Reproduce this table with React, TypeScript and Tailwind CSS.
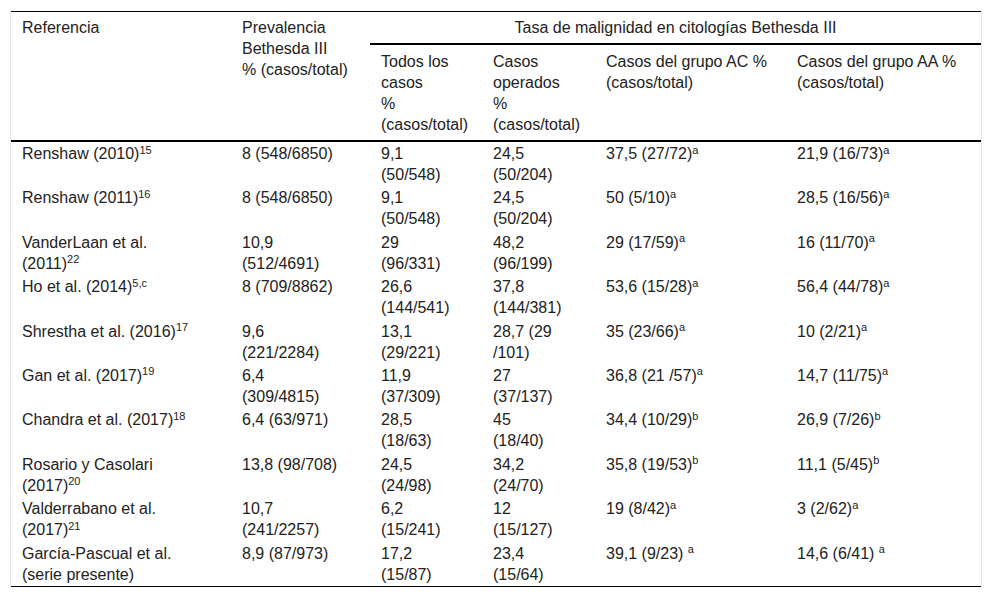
// Tabla: tasa de malignidad en citologías Bethesda III
import React from 'react';

// cada celda: líneas separadas por \n, superíndice tras ^
const rows: string[][] = [
  ['Renshaw (2010)^15', '8 (548/6850)', '9,1\n(50/548)', '24,5\n(50/204)', '37,5 (27/72)^a', '21,9 (16/73)^a'],
  ['Renshaw (2011)^16', '8 (548/6850)', '9,1\n(50/548)', '24,5\n(50/204)', '50 (5/10)^a', '28,5 (16/56)^a'],
  ['VanderLaan et al.\n(2011)^22', '10,9\n(512/4691)', '29\n(96/331)', '48,2\n(96/199)', '29 (17/59)^a', '16 (11/70)^a'],
  ['Ho et al. (2014)^5,c', '8 (709/8862)', '26,6\n(144/541)', '37,8\n(144/381)', '53,6 (15/28)^a', '56,4 (44/78)^a'],
  ['Shrestha et al. (2016)^17', '9,6\n(221/2284)', '13,1\n(29/221)', '28,7 (29\n/101)', '35 (23/66)^a', '10 (2/21)^a'],
  ['Gan et al. (2017)^19', '6,4\n(309/4815)', '11,9\n(37/309)', '27\n(37/137)', '36,8 (21 /57)^a', '14,7 (11/75)^a'],
  ['Chandra et al. (2017)^18', '6,4 (63/971)', '28,5\n(18/63)', '45\n(18/40)', '34,4 (10/29)^b', '26,9 (7/26)^b'],
  ['Rosario y Casolari\n(2017)^20', '13,8 (98/708)', '24,5\n(24/98)', '34,2\n(24/70)', '35,8 (19/53)^b', '11,1 (5/45)^b'],
  ['Valderrabano et al.\n(2017)^21', '10,7\n(241/2257)', '6,2\n(15/241)', '12\n(15/127)', '19 (8/42)^a', '3 (2/62)^a'],
  ['García-Pascual et al.\n(serie presente)', '8,9 (87/973)', '17,2\n(15/87)', '23,4\n(15/64)', '39,1 (9/23) ^a', '14,6 (6/41) ^a'],
];

const Cell: React.FC<{ value: string }> = ({ value }) => (
  <>
    {value.split('\n').map((line, i) => {
      const [text, sup] = line.split('^');
      return (
        <div key={i} className="whitespace-pre">
          {text}
          {sup && <sup className="text-[11px] -top-[0.5em]">{sup}</sup>}
        </div>
      );
    })}
  </>
);

export default function App() {
  const th = 'text-left align-top font-normal pl-[11px] pr-[4px]';
  return (
    <div
      className="pt-[11px] min-h-[598px] bg-white text-[#222] text-[16px] leading-[21px]"
      style={{ fontFamily: '"Liberation Sans", Arial, sans-serif' }}
    >
      <div className="ml-[10px] w-[972px] border-x border-[#e8e8e8]">
        <table className="w-[970px] table-fixed border-separate border-spacing-0 border-t border-b border-black">
          <colgroup>
            <col className="w-[220px]" />
            <col className="w-[139px]" />
            <col className="w-[112px]" />
            <col className="w-[113px]" />
            <col className="w-[191px]" />
            <col className="w-[195px]" />
          </colgroup>
          <thead>
            <tr>
              <th rowSpan={2} className={`${th} pt-[5px] border-b-2 border-black`}>
                Referencia
              </th>
              <th rowSpan={2} className={`${th} pt-[5px] border-b-2 border-black`}>
                Prevalencia
                <br />
                Bethesda III
                <br />% (casos/total)
              </th>
              <th colSpan={4} className="text-center font-normal pt-[5px] pb-[5px] border-b-2 border-black">
                Tasa de malignidad en citologías Bethesda III
              </th>
            </tr>
            <tr>
              <th className={`${th} pt-[6px] pb-[5px] border-b-2 border-black`}>
                Todos los
                <br />
                casos
                <br />%
                <br />
                (casos/total)
              </th>
              <th className={`${th} pt-[6px] pb-[5px] border-b-2 border-black`}>
                Casos
                <br />
                operados
                <br />%
                <br />
                (casos/total)
              </th>
              <th className={`${th} pt-[6px] pb-[5px] border-b-2 border-black`}>
                Casos del grupo AC %
                <br />
                (casos/total)
              </th>
              <th className={`${th} pt-[6px] pb-[5px] border-b-2 border-black`}>
                Casos del grupo AA %
                <br />
                (casos/total)
              </th>
            </tr>
          </thead>
          <tbody>
            {rows.map((row, r) => (
              <tr key={r}>
                {row.map((value, c) => (
                  <td key={c} className="align-top pl-[11px] pr-[4px] pt-px pb-[1.4px]">
                    <Cell value={value} />
                  </td>
                ))}
              </tr>
            ))}
          </tbody>
        </table>
      </div>
    </div>
  );
}
